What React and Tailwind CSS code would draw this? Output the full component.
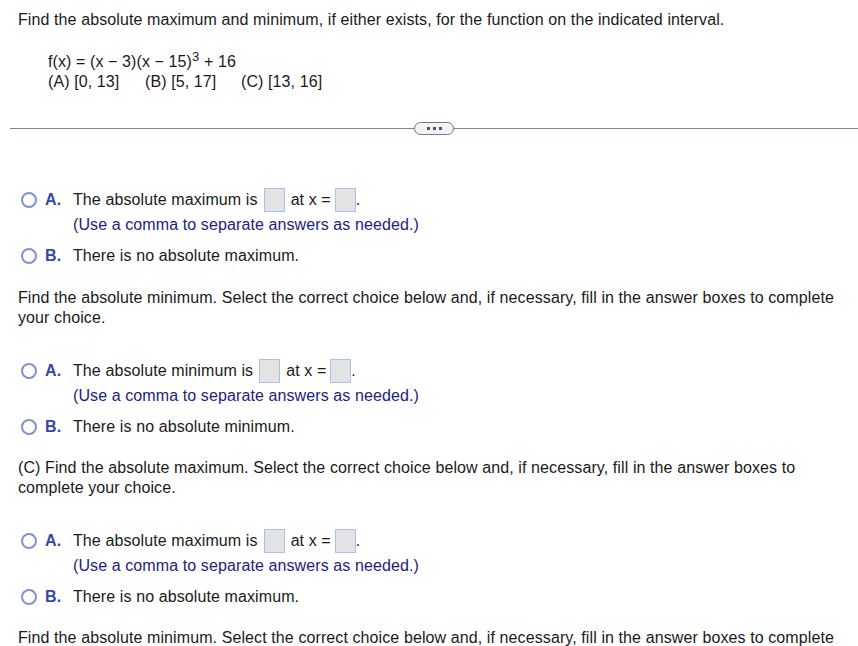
import React from 'react';

// Boş cevap kutusu
const AnswerBox = () => (
  <span className="inline-block w-[21px] h-[24px] bg-[#e3e3e3] border border-[#a9c1ec] align-middle" />
);

const Radio = ({ letter }) => (
  <div className="flex items-center w-[73px] shrink-0 pl-[21px]">
    <span className="w-[16px] h-[16px] rounded-full border-2 border-[#8193cf] bg-white" />
    <span className="ml-[8px] font-bold text-[#3548a8]">{letter}.</span>
  </div>
);

const ChoiceA = ({ kind }) => (
  <div>
    <div className="flex items-center h-[26px]">
      <Radio letter="A" />
      <span>The absolute {kind} is</span>
      <span className="ml-[6px]"><AnswerBox /></span>
      <span className="ml-[6px]">at x =</span>
      <span className="ml-[4px]"><AnswerBox /></span>
      <span>.</span>
    </div>
    <div className="pl-[73px] leading-[20px] mt-[2px] text-[#1f2180]">(Use a comma to separate answers as needed.)</div>
  </div>
);

const ChoiceB = ({ kind }) => (
  <div className="flex items-center h-[20px] mt-[11px]">
    <Radio letter="B" />
    <span>There is no absolute {kind}.</span>
  </div>
);

export default function App() {
  return (
    <div className="w-[858px] h-[646px] overflow-hidden bg-white text-[#1a1a1a] text-[16px] leading-[20px] tracking-[0.1px] font-['Liberation_Sans',Arial,sans-serif]">
      <div className="pl-[18px] pt-[10px]">
        Find the absolute maximum and minimum, if either exists, for the function on the indicated interval.
      </div>
      <div className="pl-[48px] mt-[22px]">
        <div>
          f(x) = (x − 3)(x − 15)<sup className="text-[13px]">3</sup> + 16
        </div>
        <div className="flex">
          <span className="w-[97px]">(A) [0, 13]</span>
          <span className="w-[96px]">(B) [5, 17]</span>
          <span>(C) [13, 16]</span>
        </div>
      </div>

      {/* ayırıcı çizgi */}
      <div className="relative ml-[10px] mt-[36px] h-px bg-[#7c8796]">
        <div className="absolute left-1/2 -translate-x-1/2 -top-[6px] w-[40px] h-[13px] rounded-full border border-[#6d7888] bg-[#f2f3f5] flex items-center justify-center gap-[3px]">
          <span className="w-[3px] h-[3px] bg-[#4c5564]" />
          <span className="w-[3px] h-[3px] bg-[#4c5564]" />
          <span className="w-[3px] h-[3px] bg-[#4c5564]" />
        </div>
      </div>

      <div className="mt-[58px]">
        <ChoiceA kind="maximum" />
        <ChoiceB kind="maximum" />
      </div>

      <div className="pl-[18px] pr-[20px] mt-[22px]">
        Find the absolute minimum. Select the correct choice below and, if necessary, fill in the answer boxes to complete your choice.
      </div>

      <div className="mt-[30px]">
        <ChoiceA kind="minimum" />
        <ChoiceB kind="minimum" />
      </div>

      <div className="pl-[18px] pr-[20px] mt-[21px]">
        (C) Find the absolute maximum. Select the correct choice below and, if necessary, fill in the answer boxes to complete your choice.
      </div>

      <div className="mt-[30px]">
        <ChoiceA kind="maximum" />
        <ChoiceB kind="maximum" />
      </div>

      <div className="pl-[18px] pr-[20px] mt-[21px]">
        Find the absolute minimum. Select the correct choice below and, if necessary, fill in the answer boxes to complete your choice.
      </div>
    </div>
  );
}
